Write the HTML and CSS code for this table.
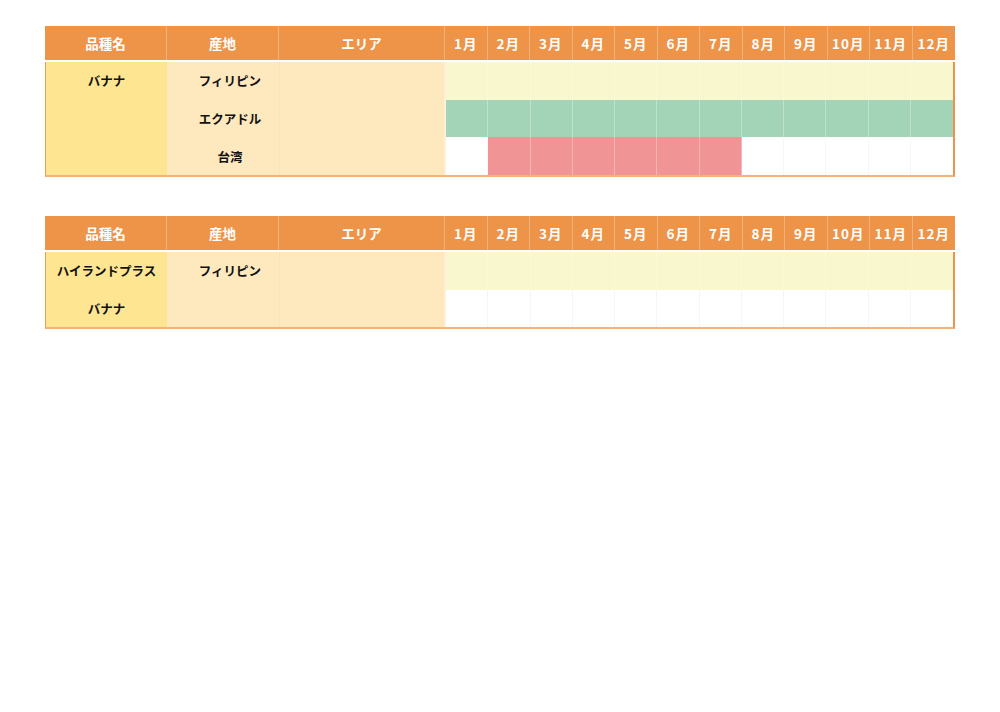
FILE: index.html
```html
<!DOCTYPE html>
<html lang="ja">
<head>
<meta charset="utf-8">
<title>産地カレンダー</title>
<link rel="stylesheet" href="styles.css">
</head>
<body>
<div class="page">
  <div class="cal">
    <div class="head">
      <div class="h">品種名</div><div class="h">産地</div><div class="h">エリア</div>
      <div class="h m">1月</div><div class="h m">2月</div><div class="h m">3月</div><div class="h m">4月</div><div class="h m">5月</div><div class="h m">6月</div><div class="h m">7月</div><div class="h m">8月</div><div class="h m">9月</div><div class="h m">10月</div><div class="h m">11月</div><div class="h m">12月</div>
    </div>
    <div class="body rows3">
      <div class="variety"><span class="vline">バナナ</span></div>
      <div class="origin">フィリピン</div><div class="area"></div>
      <div class="c y"></div><div class="c y"></div><div class="c y"></div><div class="c y"></div><div class="c y"></div><div class="c y"></div><div class="c y"></div><div class="c y"></div><div class="c y"></div><div class="c y"></div><div class="c y"></div><div class="c y last"></div>
      <div class="origin">エクアドル</div><div class="area"></div>
      <div class="c g"></div><div class="c g"></div><div class="c g"></div><div class="c g"></div><div class="c g"></div><div class="c g"></div><div class="c g"></div><div class="c g"></div><div class="c g"></div><div class="c g"></div><div class="c g"></div><div class="c g last"></div>
      <div class="origin">台湾</div><div class="area"></div>
      <div class="c w"></div><div class="c p"></div><div class="c p"></div><div class="c p"></div><div class="c p"></div><div class="c p"></div><div class="c p"></div><div class="c w"></div><div class="c w"></div><div class="c w"></div><div class="c w"></div><div class="c w last"></div>
    </div>
  </div>

  <div class="cal">
    <div class="head">
      <div class="h">品種名</div><div class="h">産地</div><div class="h">エリア</div>
      <div class="h m">1月</div><div class="h m">2月</div><div class="h m">3月</div><div class="h m">4月</div><div class="h m">5月</div><div class="h m">6月</div><div class="h m">7月</div><div class="h m">8月</div><div class="h m">9月</div><div class="h m">10月</div><div class="h m">11月</div><div class="h m">12月</div>
    </div>
    <div class="body rows2">
      <div class="variety"><span class="vline">ハイランドプラス</span><span class="vline">バナナ</span></div>
      <div class="origin">フィリピン</div><div class="area"></div>
      <div class="c y"></div><div class="c y"></div><div class="c y"></div><div class="c y"></div><div class="c y"></div><div class="c y"></div><div class="c y"></div><div class="c y"></div><div class="c y"></div><div class="c y"></div><div class="c y"></div><div class="c y last"></div>
      <div class="origin"></div><div class="area"></div>
      <div class="c w"></div><div class="c w"></div><div class="c w"></div><div class="c w"></div><div class="c w"></div><div class="c w"></div><div class="c w"></div><div class="c w"></div><div class="c w"></div><div class="c w"></div><div class="c w"></div><div class="c w last"></div>
    </div>
  </div>
</div>
</body>
</html>
```

FILE: styles.css
```css
html, body {
  margin: 0;
  padding: 0;
  background: #ffffff;
}

body {
  font-family: "Noto Sans CJK JP", "Noto Sans", sans-serif;
}

.page {
  padding: 26px 0 0 45px;
  display: flex;
  flex-direction: column;
  gap: 39px;
}

.cal {
  width: 910px;
}

.head,
.body {
  display: grid;
  grid-template-columns: 122px 112px 166px repeat(12, 1fr);
}

.head {
  background: #ee9449;
  height: 34px;
  margin-bottom: 2px;
}

.h {
  display: flex;
  align-items: center;
  justify-content: center;
  color: #ffffff;
  font-size: 13.5px;
  font-weight: 700;
  border-right: 1px solid rgba(255, 255, 255, 0.28);
}

.h.m {
  letter-spacing: 1px;
}

.h:last-child {
  border-right: none;
}

.body {
  border-left: 1px solid #ef9a55;
  border-right: 2px solid #ee9449;
  border-bottom: 2px solid #f4b27c;
  grid-auto-rows: 37.7px;
  font-size: 12.5px;
  font-weight: 700;
  color: #111111;
}

.rows3 .variety { grid-row: 1 / span 3; }
.rows2 .variety { grid-row: 1 / span 2; }

.variety {
  grid-column: 1;
  background: #fde592;
  display: flex;
  flex-direction: column;
  align-items: center;
  margin-right: 1px;
}

.vline {
  display: block;
  line-height: 38px;
  white-space: nowrap;
}

.origin {
  background: #fee8bd;
  display: flex;
  align-items: center;
  justify-content: center;
  padding-left: 14px;
  border-right: 1px solid #fbe3b6;
  margin-left: -1px;
}

.area {
  background: #fee8bd;
  border-right: 2px solid #fdf0d8;
}

.c {
  border-right: 1px solid rgba(255, 255, 255, 0.3);
}

.c.last {
  border-right: none;
}

.y { background: #f8f7cd; }
.g { background: #a4d4b8; }
.p { background: #f09495; }
.w { background: #ffffff; border-right-color: #f6f6f6; }
```
